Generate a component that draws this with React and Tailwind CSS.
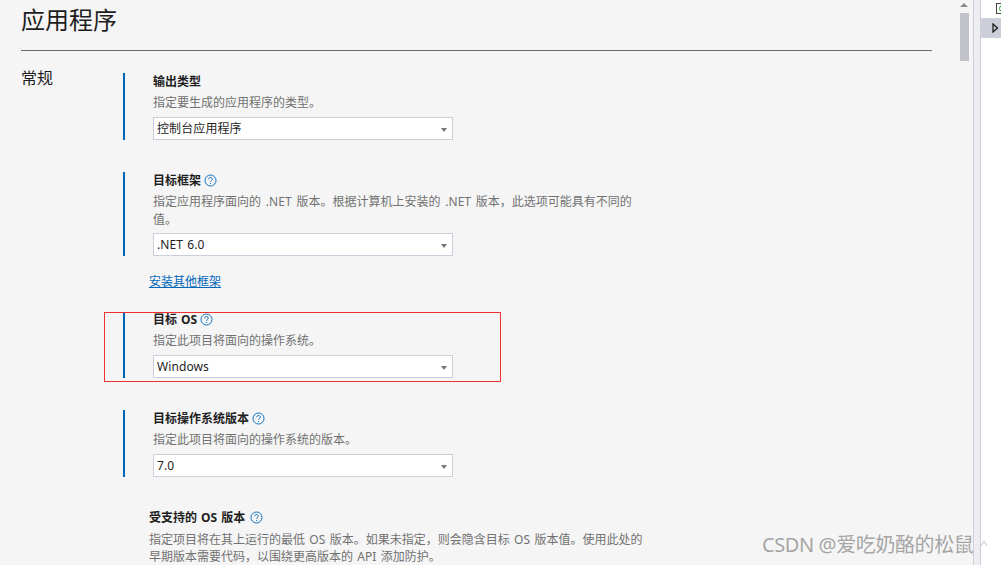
function Help() {
  return (
    <svg width="13" height="13" viewBox="0 0 13 13" className="mt-[-2px] shrink-0" fill="none">
      <circle cx="6.5" cy="6.5" r="5.5" stroke="#0e70c0" strokeWidth="1" />
      <path d="M4.7 5.2c0-1.1.8-1.7 1.8-1.7s1.8.6 1.8 1.6c0 1.4-1.7 1.4-1.7 2.8" stroke="#0e70c0" strokeWidth="1" />
      <rect x="6.1" y="9" width="1" height="1" fill="#0e70c0" />
    </svg>
  );
}

function Select({ value }) {
  return (
    <div className="flex h-[23px] w-[300px] items-center justify-between border border-[#ccced9] bg-white pl-[3px] pr-[5px] text-[12px] leading-none tracking-[0.1px] text-[#1e1e1e] [word-spacing:1px]">
      <span>{value}</span>
      <span className="mt-[2px] h-0 w-0 border-x-[3.5px] border-t-[4px] border-x-transparent border-t-[#777]" />
    </div>
  );
}

function Field({ title, help, desc, value, className, tight, descLeading }) {
  return (
    <div className={`flex ${className}`}>
      <div className="w-[2px] bg-[#0067b8]" />
      <div className={`ml-[28px] flex flex-col ${tight ? "" : "pt-px"}`}>
        <div className="flex items-center gap-[3px] text-[12px] leading-[16px] font-bold text-[#1e1e1e] [word-spacing:1px]">
          <span>{title}</span>
          {help && <Help />}
        </div>
        <p className={`mt-[4px] w-[490px] text-[12px] text-[#717171] [word-spacing:1.75px] ${descLeading || "leading-[18px]"}`}>{desc}</p>
        <div className="mt-[5px]">
          <Select value={value} />
        </div>
      </div>
    </div>
  );
}

export default function App() {
  return (
    <div className="relative flex h-[565px] w-[1001px] overflow-hidden bg-[#f5f5f5] font-['Noto_Sans','Noto_Sans_CJK_SC',sans-serif]">
      <main className="w-[959px] shrink-0 pl-[21px]">
        <h1 className="pt-[3px] text-[24px] leading-[34px] font-normal text-[#1e1e1e]">应用程序</h1>
        <div className="mt-[13px] h-px w-[911px] bg-[#6d6d6d]" />
        <div className="flex pt-[16px]">
          <div className="w-[102px] shrink-0 text-[16px] leading-[22px] text-[#1e1e1e]">常规</div>
          <div className="flex flex-col pt-[6px]">
            <Field title="输出类型" desc="指定要生成的应用程序的类型。" value="控制台应用程序" />
            <Field
              className="mt-[32px]"
              title="目标框架"
              help
              descLeading="leading-[17.5px]"
              desc="指定应用程序面向的 .NET 版本。根据计算机上安装的 .NET 版本，此选项可能具有不同的值。"
              value=".NET 6.0"
            />
            <a className="mt-[17px] ml-[26px] text-[12px] leading-[18px] text-[#0067b8] underline">安装其他框架</a>
            <Field
              className="mt-[21px]"
              tight
              title="目标 OS"
              help
              desc="指定此项目将面向的操作系统。"
              value="Windows"
            />
            <Field
              className="mt-[32px]"
              title="目标操作系统版本"
              help
              desc="指定此项目将面向的操作系统的版本。"
              value="7.0"
            />
            <div className="mt-[33px] ml-[26px] flex items-center gap-[5px] text-[12px] leading-[16px] font-bold text-[#1e1e1e] [word-spacing:1px]">
              <span>受支持的 OS 版本</span>
              <Help />
            </div>
            <p className="mt-[5px] ml-[26px] w-[497px] text-[12px] leading-[17px] text-[#717171] [word-spacing:1.25px]">
              指定项目将在其上运行的最低 OS 版本。如果未指定，则会隐含目标 OS 版本值。使用此处的早期版本需要代码，以围绕更高版本的 API 添加防护。
            </p>
          </div>
        </div>
      </main>
      <div className="flex w-[14px] shrink-0 flex-col items-start pl-px">
        <span className="mt-[3px] h-0 w-0 border-x-[4.5px] border-b-[4px] border-x-transparent border-b-[#8a8a8f]" />
        <div className="mt-[6px] h-[48px] w-[9px] bg-[#c2c3c9]" />
      </div>
      <div className="w-[8px] shrink-0 border-x border-[#ccced9] bg-[#eeeef2]" />
      <div className="flex-1 bg-white">
        <div className="mt-[3px] ml-[15px] h-[11px] w-[11px] border border-[#444] pl-[2px]">
          <div className="mt-[1px] h-[7px] w-[7px] rounded-full border border-[#2ca02c]" />
        </div>
        <div className="mt-[4px] flex h-[20px] items-center bg-[#ccced9] pl-[11px]">
          <svg width="7" height="10" viewBox="0 0 7 10" fill="none">
            <path d="M1 1l4.5 4L1 9z" stroke="#1e1e1e" strokeWidth="1.3" />
          </svg>
        </div>
      </div>
      <div className="absolute top-[312px] left-[104px] h-[70px] w-[397px] border border-[#f03030]" />
      <div className="absolute top-[532px] left-[762px] text-[20px] leading-[26px] tracking-[-0.4px] whitespace-nowrap text-[#8f8f8f]/80">
        CSDN @爱吃奶酪的松鼠
      </div>
      <svg width="8" height="7" viewBox="0 0 8 7" className="absolute top-[540px] left-[980px]" fill="none">
        <path d="M1 6l3-5 3 5" stroke="#b5b5b5" strokeWidth="0.8" />
      </svg>
    </div>
  );
}
